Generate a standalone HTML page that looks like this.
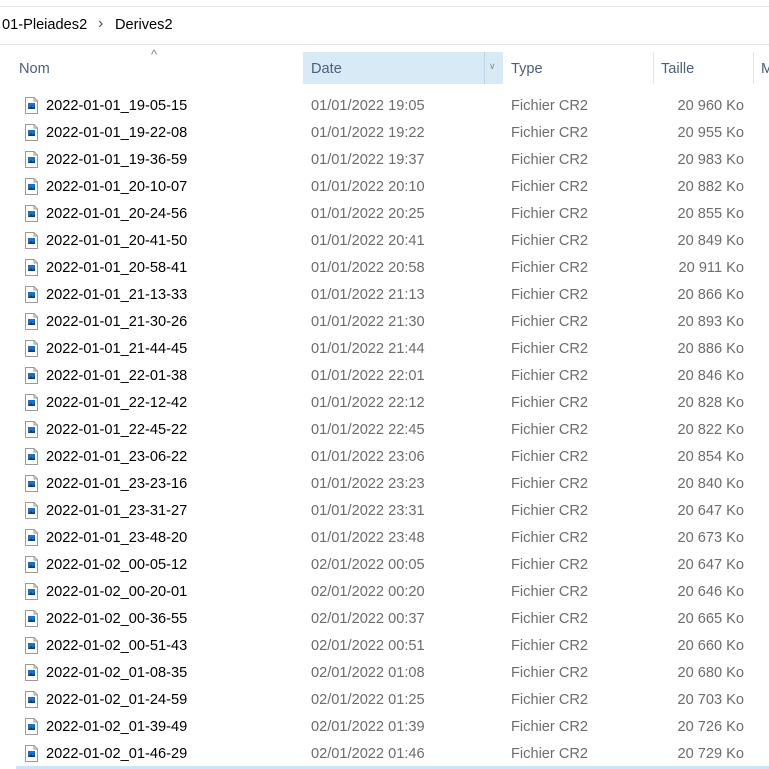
<!DOCTYPE html>
<html><head><style>
*{margin:0;padding:0;box-sizing:border-box}
body{width:769px;height:769px;overflow:hidden;background:#fff;font-family:"Liberation Sans",sans-serif;position:relative}
.t{position:absolute;white-space:nowrap;font-size:14.6px}
.row{position:absolute;left:0;width:769px;height:27px}
.ic{position:absolute;left:25px;top:5px}
.n{left:46px;color:#000}
.d{left:311px;color:#6d6d6d}
.ty{left:511px;color:#6d6d6d}
.s{right:25px;color:#6d6d6d;text-align:right}
</style></head><body>
<div style="position:absolute;left:0;top:6px;width:769px;height:1px;background:#e5e5e5"></div>
<div style="position:absolute;left:0;top:44px;width:769px;height:1px;background:#e5e5e5"></div>
<div class="t" style="left:2px;top:17px;color:#000">01-Pleiades2</div>
<div class="t" style="left:98px;top:15px;color:#555;font-size:16px">›</div>
<div class="t" style="left:115px;top:17px;color:#000">Derives2</div>
<div style="position:absolute;left:303px;top:52px;width:200px;height:32px;background:#d9eaf7"></div>
<div style="position:absolute;left:484px;top:52px;width:1px;height:32px;background:#bcd2e5"></div>
<div style="position:absolute;left:653px;top:52px;width:1px;height:32px;background:#e5e5e5"></div>
<div style="position:absolute;left:753px;top:52px;width:1px;height:32px;background:#e5e5e5"></div>
<div class="t" style="left:151px;top:47px;color:#888;font-size:13px">^</div>
<div class="t" style="left:19px;top:61px;color:#4c607a">Nom</div>
<div class="t" style="left:311px;top:61px;color:#4c607a">Date</div>
<div class="t" style="left:489px;top:61px;color:#888;font-size:9px">∨</div>
<div class="t" style="left:511px;top:61px;color:#4c607a">Type</div>
<div class="t" style="left:661px;top:61px;color:#4c607a">Taille</div>
<div class="t" style="left:761px;top:61px;color:#4c607a">M</div>
<div id="rows"></div>
<div style="position:absolute;left:16px;top:766px;width:753px;height:3px;background:#cce4f7"></div>
<script>
var d=[["2022-01-01_19-05-15","01/01/2022 19:05","20 960"],["2022-01-01_19-22-08","01/01/2022 19:22","20 955"],["2022-01-01_19-36-59","01/01/2022 19:37","20 983"],["2022-01-01_20-10-07","01/01/2022 20:10","20 882"],["2022-01-01_20-24-56","01/01/2022 20:25","20 855"],["2022-01-01_20-41-50","01/01/2022 20:41","20 849"],["2022-01-01_20-58-41","01/01/2022 20:58","20 911"],["2022-01-01_21-13-33","01/01/2022 21:13","20 866"],["2022-01-01_21-30-26","01/01/2022 21:30","20 893"],["2022-01-01_21-44-45","01/01/2022 21:44","20 886"],["2022-01-01_22-01-38","01/01/2022 22:01","20 846"],["2022-01-01_22-12-42","01/01/2022 22:12","20 828"],["2022-01-01_22-45-22","01/01/2022 22:45","20 822"],["2022-01-01_23-06-22","01/01/2022 23:06","20 854"],["2022-01-01_23-23-16","01/01/2022 23:23","20 840"],["2022-01-01_23-31-27","01/01/2022 23:31","20 647"],["2022-01-01_23-48-20","01/01/2022 23:48","20 673"],["2022-01-02_00-05-12","02/01/2022 00:05","20 647"],["2022-01-02_00-20-01","02/01/2022 00:20","20 646"],["2022-01-02_00-36-55","02/01/2022 00:37","20 665"],["2022-01-02_00-51-43","02/01/2022 00:51","20 660"],["2022-01-02_01-08-35","02/01/2022 01:08","20 680"],["2022-01-02_01-24-59","02/01/2022 01:25","20 703"],["2022-01-02_01-39-49","02/01/2022 01:39","20 726"],["2022-01-02_01-46-29","02/01/2022 01:46","20 729"]];
var ic='<svg class="ic" width="13" height="17" viewBox="0 0 13 17"><path d="M0.5 0.5H9L12.5 4V16.5H0.5Z" fill="#fff" stroke="#9a9a9a"/><path d="M9 0.5V4H12.5" fill="none" stroke="#9a9a9a"/><rect x="3" y="6" width="7" height="6" fill="#1f6fc4"/><path d="M3 12L6 9L8 11L10 9V12Z" fill="#0b3d7a"/></svg>';
var h='';d.forEach(function(r,i){h+='<div class="row" style="top:'+(92+i*27)+'px">'+ic+'<div class="t n" style="top:6px">'+r[0]+'</div><div class="t d" style="top:6px">'+r[1]+'</div><div class="t ty" style="top:6px">Fichier CR2</div><div class="t s" style="top:6px">'+r[2]+' Ko</div></div>'});
document.getElementById('rows').innerHTML=h;
</script>
</body></html>
